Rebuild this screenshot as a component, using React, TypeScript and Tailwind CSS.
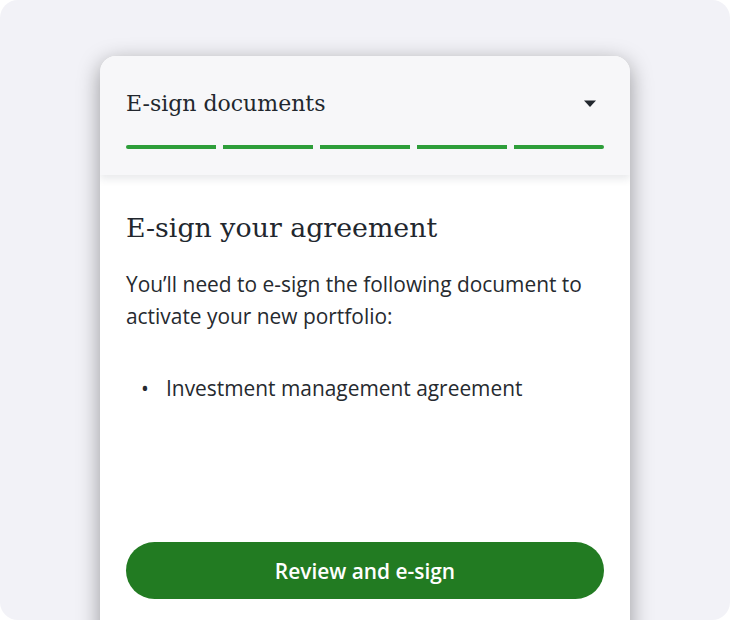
const steps = [0, 1, 2, 3, 4];

export default function App() {
  return (
    <div className="w-[730px] h-[620px] bg-white">
      <div className="w-[730px] h-[620px] rounded-[18px] bg-[#f2f2f7] overflow-hidden pt-[56px] pl-[100px]">
        <div className="w-[530px] h-[600px] bg-white rounded-t-[16px] shadow-[0_6px_22px_rgba(0,0,0,0.38)] overflow-hidden">
          <div className="bg-[#f7f7f9] px-[26px] pt-[34px] pb-[26px] shadow-[0_4px_8px_rgba(30,40,60,0.10)] relative">
            <div className="flex items-center justify-between">
              <span className="text-[22px] leading-[28px] text-[#22272e]" style={{ fontFamily: '"DejaVu Serif", serif' }}>
                E-sign documents
              </span>
              <svg width="14" height="8" viewBox="0 0 14 8" className="mr-[7px]">
                <path d="M1 0.5 L13 0.5 L7 7 Z" fill="#22272e" />
              </svg>
            </div>
            <div className="flex gap-[7px] mt-[27px]">
              {steps.map((i) => (
                <div
                  key={i}
                  className={
                    'h-[4px] flex-1 bg-[#2e9e3a] ' +
                    (i === 0 ? 'rounded-l-full' : i === 4 ? 'rounded-r-full' : '')
                  }
                />
              ))}
            </div>
          </div>
          <div className="px-[26px] pt-[35px]" style={{ fontFamily: '"Open Sans", sans-serif' }}>
            <h1 className="text-[26.8px] leading-[36px] text-[#22272e]" style={{ fontFamily: '"DejaVu Serif", serif' }}>
              E-sign your agreement
            </h1>
            <p className="mt-[22px] text-[20.9px] leading-[32px] text-[#262a2f]">
              You’ll need to e-sign the following document to activate your new portfolio:
            </p>
            <ul className="mt-[40px] text-[20.9px] leading-[32px] text-[#262a2f]">
              <li className="flex">
                <span className="w-[40px] pl-[15px]">•</span>
                <span>Investment management agreement</span>
              </li>
            </ul>
            <button className="mt-[138px] w-full h-[57px] pt-[3px] rounded-full bg-[#227b22] text-white text-[20.9px] font-semibold">
              Review and e-sign
            </button>
          </div>
        </div>
      </div>
    </div>
  );
}
